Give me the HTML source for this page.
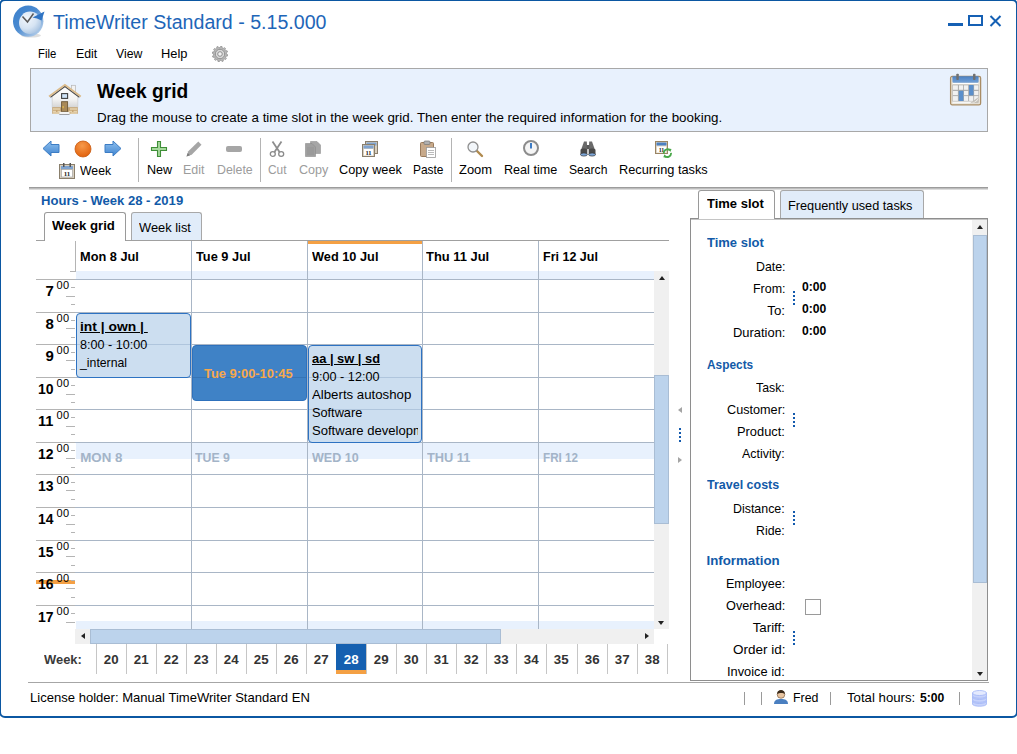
<!DOCTYPE html><html lang="en"><head><meta charset="utf-8"><title>TimeWriter Standard - 5.15.000</title><style>
*{box-sizing:border-box;margin:0;padding:0}
html,body{width:1017px;height:754px;background:#fff;overflow:hidden}
body{font-family:"Liberation Sans",sans-serif;font-size:13.300px;color:#000;position:relative}
.a{position:absolute;white-space:nowrap;line-height:1;transform-origin:0 0}
.win{left:-1px;top:-1px;width:1019px;height:719px;border:2px solid #0b57a2;border-radius:6px}
.dis{color:#9c9c9c}
.b{font-weight:bold}
.u{text-decoration:underline}
.blue{color:#125aa8}
.gl{background:#a9b6c6}
.mm{font-size:11px;letter-spacing:.5px}
.wsep{width:1px;background:#c6c6c6;top:644px;height:30px}
.ev{background:rgba(178,205,232,.66);border:1px solid #2d72c2;border-radius:4px;overflow:hidden}
.dots{width:2px;height:14px;background:repeating-linear-gradient(#1259ad 0 2px,transparent 2px 4px)}
.sb{background:#f0f0f0}
.th{background:#bcd3ec;border:1px solid #a9bdd4}
</style></head><body>
<div class="a win"></div>
<svg class="a" style="left:11px;top:3px" width="36" height="36" viewBox="0 0 36 36">
<defs><radialGradient id="cg" cx="35%" cy="30%" r="75%"><stop offset="0" stop-color="#f2f7fc"/><stop offset=".6" stop-color="#d6e4f3"/><stop offset="1" stop-color="#a9c4e2"/></radialGradient>
<linearGradient id="rg" x1="0" y1="0" x2="1" y2="1"><stop offset="0" stop-color="#3a80cc"/><stop offset=".45" stop-color="#4a8ad0"/><stop offset=".8" stop-color="#9fc0e4"/><stop offset="1" stop-color="#d0e0f2"/></linearGradient></defs>
<ellipse cx="20" cy="32.500" rx="10" ry="2" fill="#000" opacity=".13"/>
<ellipse cx="17.200" cy="18.200" rx="15.200" ry="15.600" fill="url(#rg)"/>
<ellipse cx="19" cy="19.800" rx="11" ry="11.200" fill="url(#cg)"/>
<path d="M11.500 13.500L16.500 19L22.500 10.500" fill="none" stroke="#5a5a5a" stroke-width="1.500"/>
<path d="M21.500 14.500L33.500 8.500L30.500 17.500Q26 15 21.500 14.500Z" fill="#2f74c4"/>
</svg>
<div class="a" style="left:52.5px;top:12px;font-size:20px;transform:scaleX(0.980);color:#1e66b8">TimeWriter Standard - 5.15.000</div>
<div class="a" style="left:948px;top:23px;width:15px;height:3px;background:#1560b4"></div>
<div class="a" style="left:968px;top:15px;width:15px;height:11px;border:2px solid #1560b4"></div>
<svg class="a" style="left:988px;top:14px" width="14" height="14" viewBox="0 0 14 14"><path d="M2.500 2L12.500 12M12.500 2L2.500 12" stroke="#1560b4" stroke-width="2" fill="none"/></svg>
<div class="a" style="left:38.4px;top:47px;transform:scaleX(0.851);">File</div>
<div class="a" style="left:75.5px;top:47px;transform:scaleX(0.927);">Edit</div>
<div class="a" style="left:116.3px;top:47px;transform:scaleX(0.922);">View</div>
<div class="a" style="left:161.1px;top:47px;transform:scaleX(0.968);">Help</div>
<svg class="a" style="left:212px;top:46px" width="16" height="16" viewBox="0 0 16 16"><path d="M14.30 8.00L15.77 8.73L15.53 10.02L13.90 10.20L13.46 11.15L14.36 12.52L13.52 13.52L12.02 12.85L11.15 13.46L11.25 15.09L10.02 15.53L9.05 14.21L8.00 14.30L7.27 15.77L5.98 15.53L5.80 13.90L4.85 13.46L3.48 14.36L2.48 13.52L3.15 12.02L2.54 11.15L0.91 11.25L0.47 10.02L1.79 9.05L1.70 8.00L0.23 7.27L0.47 5.98L2.10 5.80L2.54 4.85L1.64 3.48L2.48 2.48L3.98 3.15L4.85 2.54L4.75 0.91L5.98 0.47L6.95 1.79L8.00 1.70L8.73 0.23L10.02 0.47L10.20 2.10L11.15 2.54L12.52 1.64L13.52 2.48L12.85 3.98L13.46 4.85L15.09 4.75L15.53 5.98L14.21 6.95Z" fill="#b9b9b9" stroke="#8a8a8a" stroke-width=".7"/><circle cx="8" cy="8" r="4.700" fill="#d9d9d9" stroke="#8c8c8c" stroke-width=".9"/><circle cx="8" cy="8" r="2.300" fill="#f2f2f2" stroke="#858585" stroke-width=".9"/></svg>
<div class="a" style="left:30px;top:68px;width:958px;height:64px;background:#e8f1fd;border:1px solid #a8a8a8"></div>
<svg class="a" style="left:47px;top:82px" width="36" height="34" viewBox="0 0 36 34">
<defs><linearGradient id="hg" x1="0" y1="0" x2="0" y2="1"><stop offset="0" stop-color="#fff"/><stop offset=".6" stop-color="#f4f4f4"/><stop offset="1" stop-color="#d4d4d4"/></linearGradient></defs>
<rect x="24.500" y="3.300" width="4" height="8.500" fill="#f2f2f2" stroke="#b4b4b4" stroke-width=".7"/>
<path d="M5.200 13.800L17.900 4.200L30.800 13.800V25.500H5.200Z" fill="url(#hg)" stroke="#c8c8c8" stroke-width=".6"/>
<rect x="5.200" y="25.200" width="25.600" height="6.600" fill="#c6a676"/>
<path d="M6 27H13M23 27H30M6 29.300H9M10.500 29.300H13.500M22 29.300H25M26.500 29.300H30M6 31H12M23.500 31H30" stroke="#e6d4b0" stroke-width="1.300"/>
<path d="M3.400 15.200L17.900 4.500L32.400 15.200" fill="none" stroke="#4e4e4e" stroke-width="1.200"/>
<path d="M2 14.500L17.900 2.700L33.800 14.500" fill="none" stroke="#dcbc8c" stroke-width="1.700"/>
<rect x="14.600" y="11.600" width="6" height="4.800" fill="#cfe3f6" stroke="#404040" stroke-width="1.100"/>
<rect x="14.600" y="19.700" width="6" height="10" fill="#a98958" stroke="#6b5636" stroke-width=".9"/>
<rect x="15.600" y="24" width="1" height="2.200" fill="#f0c444"/>
<rect x="12.300" y="29.900" width="10.200" height="2.100" fill="#f4f4f4"/>
<rect x="12.300" y="32" width="10.200" height=".8" fill="#8c8c8c"/>
</svg>
<div class="a b" style="left:97.4px;top:82px;font-size:19.4px;transform:scaleX(0.988);">Week grid</div>
<div class="a" style="left:97.4px;top:111px;transform:scaleX(1.005);">Drag the mouse to create a time slot in the week grid. Then enter the required information for the booking.</div>
<svg class="a" style="left:949px;top:73px" width="33" height="33" viewBox="0 0 33 33">
<defs><linearGradient id="kg" x1="0" y1="0" x2="0" y2="1"><stop offset="0" stop-color="#4a80c2"/><stop offset="1" stop-color="#73a0d6"/></linearGradient></defs>
<rect x="1.600" y="3.400" width="30" height="28.400" rx="1.600" fill="#ece6da" stroke="#a98d66" stroke-width="1.300"/>
<rect x="3.400" y="3.200" width="26.200" height="6.600" rx="1" fill="url(#kg)"/>
<rect x="3.800" y="10" width="25.400" height="1.100" fill="#fff"/>
<rect x="3.400" y="11.600" width="26.400" height="17" fill="#a9a9a9"/>
<rect x="3.9" y="12.3" width="5.0" height="4.5" fill="#f1f1f1"/><rect x="3.9" y="17.9" width="5.0" height="4.3" fill="#f1f1f1"/><rect x="3.9" y="23.1" width="5.0" height="4.8" fill="#f1f1f1"/><rect x="9.9" y="12.3" width="4.3" height="4.5" fill="#f1f1f1"/><rect x="9.9" y="17.9" width="4.3" height="4.3" fill="#5b8fcb"/><rect x="9.9" y="23.1" width="4.3" height="4.8" fill="#5b8fcb"/><rect x="15.0" y="12.3" width="4.2" height="4.5" fill="#f1f1f1"/><rect x="15.0" y="17.9" width="4.2" height="4.3" fill="#f1f1f1"/><rect x="15.0" y="23.1" width="4.2" height="4.8" fill="#f1f1f1"/><rect x="20.1" y="12.3" width="4.2" height="4.5" fill="#5b8fcb"/><rect x="20.1" y="17.9" width="4.2" height="4.3" fill="#5b8fcb"/><rect x="20.1" y="23.1" width="4.2" height="4.8" fill="#f1f1f1"/><rect x="25.1" y="12.3" width="4.3" height="4.5" fill="#f1f1f1"/><rect x="25.1" y="17.9" width="4.3" height="4.3" fill="#f1f1f1"/><rect x="25.1" y="23.1" width="4.3" height="4.8" fill="#f1f1f1"/><rect x="9.9" y="17.9" width="4.3" height="10" fill="#5b8fcb"/><rect x="20.1" y="12" width="4.2" height="10.200" fill="#5b8fcb"/>
<rect x="3.800" y="28.600" width="25.600" height="1.600" fill="#f6f6f6"/>
<path d="M29.600 24L29.600 30.200L21 30.200Z" fill="#c4c0b8"/><path d="M29.600 24.500C28 28 25 29.500 21.500 30.200C26 29.500 28.500 29 29.600 24.500Z" fill="#fff"/>
<rect x="7.300" y=".8" width="2.500" height="6.200" rx=".8" fill="#707070"/><rect x="24" y=".8" width="2.500" height="6.200" rx=".8" fill="#707070"/>
</svg>
<svg class="a" style="left:42px;top:140px" width="18" height="17" viewBox="0 0 18 17"><defs><linearGradient id="ag" x1="0" y1="0" x2="0" y2="1"><stop offset="0" stop-color="#8fc0ee"/><stop offset="1" stop-color="#3f84d0"/></linearGradient></defs><path d="M1 8.500L9 1V4.500H17V12.500H9V16Z" fill="url(#ag)" stroke="#3c7cc4" stroke-width="1"/></svg>
<svg class="a" style="left:74px;top:140px" width="18" height="18" viewBox="0 0 18 18"><defs><radialGradient id="og" cx="45%" cy="30%" r="70%"><stop offset="0" stop-color="#f79a4a"/><stop offset="1" stop-color="#e2620e"/></radialGradient></defs><circle cx="9" cy="9" r="8" fill="url(#og)" stroke="#c85a10" stroke-width=".8"/></svg>
<svg class="a" style="left:104px;top:140px" width="18" height="17" viewBox="0 0 18 17"><path d="M17 8.500L9 1V4.500H1V12.500H9V16Z" fill="url(#ag)" stroke="#3c7cc4" stroke-width="1"/></svg>
<svg class="a" style="left:59px;top:163px" width="16" height="16" viewBox="0 0 16 16"><rect x=".5" y="1.5" width="15" height="14" fill="#d8cfbf" stroke="#8a7f6c"/><rect x="2" y="3" width="12" height="3" fill="#7fa3cf"/><rect x="2.5" y="6.5" width="11" height="7.500" fill="#fff" stroke="#999" stroke-width=".6"/><text x="8" y="13" font-size="7" font-weight="bold" text-anchor="middle" font-family="Liberation Serif,serif" fill="#222">11</text><rect x="4" y="0" width="1.500" height="4" fill="#555"/><rect x="10.500" y="0" width="1.500" height="4" fill="#555"/></svg>
<div class="a" style="left:79.8px;top:164px;transform:scaleX(0.921);">Week</div>
<div class="a" style="left:138px;top:138px;width:1px;height:44px;background:#b4b4b4"></div>
<div class="a" style="left:260px;top:138px;width:1px;height:44px;background:#b4b4b4"></div>
<div class="a" style="left:451px;top:138px;width:1px;height:44px;background:#b4b4b4"></div>
<svg class="a" style="left:150px;top:140px" width="18" height="18" viewBox="0 0 18 18"><path d="M7.500 1.500H10.500V7.500H16.500V10.500H10.500V16.500H7.500V10.500H1.500V7.500H7.500Z" fill="#a6d89c" stroke="#3f8f38" stroke-width="1.100"/></svg>
<svg class="a" style="left:185px;top:140px" width="18" height="18" viewBox="0 0 18 18"><path d="M1.500 16.500L3.300 11.300L13.300 1.500L16.500 4.700L6.700 14.700Z" fill="#a6a6a6"/><path d="M1.500 16.500L2.700 13L5 15.300Z" fill="#7a7a7a"/></svg>
<div class="a" style="left:226px;top:146px;width:16px;height:6px;background:#a6a6a6;border-radius:2px"></div>
<svg class="a" style="left:269px;top:141px" width="16" height="17" viewBox="0 0 16 17"><path d="M3.500 .5L10.500 11M12.500 .5L5.500 11" stroke="#8e8e8e" stroke-width="1.800" fill="none"/><ellipse cx="3.800" cy="13" rx="2.500" ry="2.300" fill="none" stroke="#8a8a8a" stroke-width="1.300"/><ellipse cx="12.200" cy="13" rx="2.500" ry="2.300" fill="none" stroke="#8a8a8a" stroke-width="1.300"/></svg>
<svg class="a" style="left:304px;top:139px" width="18" height="19" viewBox="0 0 18 19"><path d="M6.500 2.500H13L16.500 6V14.500H6.500Z" fill="#a6a6a6" stroke="#949494" stroke-width=".6"/><path d="M1.500 4.500H8L11.500 8V17.500H1.500Z" fill="#a0a0a0" stroke="#8c8c8c" stroke-width=".6"/><path d="M3 9H10M3 11H10M3 13H10M3 15H10" stroke="#8f8f8f" stroke-width=".6"/></svg>
<svg class="a" style="left:361px;top:140px" width="18" height="18" viewBox="0 0 18 18"><rect x="4.500" y="1.500" width="12" height="12" fill="#d8cfbf" stroke="#8a7f6c"/><rect x="5.500" y="2.500" width="10" height="3" fill="#7fa3cf"/><rect x="1.500" y="4.500" width="12" height="12" fill="#d8cfbf" stroke="#8a7f6c"/><rect x="2.500" y="5.500" width="10" height="3" fill="#7fa3cf"/><rect x="3" y="9" width="9" height="6.500" fill="#fff"/><text x="7.500" y="15" font-size="6.500" font-weight="bold" text-anchor="middle" font-family="Liberation Serif,serif" fill="#222">11</text></svg>
<svg class="a" style="left:419px;top:140px" width="18" height="18" viewBox="0 0 18 18"><rect x="1.500" y="2.500" width="13" height="14" rx="1" fill="#c7a98a" stroke="#9a7b5c"/><rect x="5" y="1" width="6" height="3.500" rx="1" fill="#b0b0b0" stroke="#777" stroke-width=".7"/><rect x="7.500" y="7.500" width="9" height="10" fill="#fff" stroke="#999" stroke-width=".8"/><path d="M9 10.500H15M9 12.500H15M9 14.500H15" stroke="#aaa" stroke-width=".8"/></svg>
<svg class="a" style="left:466px;top:140px" width="18" height="18" viewBox="0 0 18 18"><path d="M10 10L16 16" stroke="#b08a4e" stroke-width="2.400" stroke-linecap="round"/><circle cx="7" cy="7" r="5" fill="#f2f6fa" stroke="#8f8f8f" stroke-width="1.300"/></svg>
<svg class="a" style="left:522px;top:139px" width="18" height="18" viewBox="0 0 18 18"><circle cx="9" cy="9" r="7" fill="#f5f5f5" stroke="#8c8c8c" stroke-width="2"/><path d="M9 4V9.500" stroke="#2a6fc0" stroke-width="1.800"/></svg>
<svg class="a" style="left:579px;top:140px" width="18" height="18" viewBox="0 0 18 18"><path d="M5 1.500H7.800L8.300 10H2Z" fill="#6a6a6a"/><path d="M10.200 1.500H13L16 10H9.700Z" fill="#6a6a6a"/><path d="M1.500 10C1.500 8 8.300 8 8.300 10V14.500H1.500Z" fill="#4a4a4a"/><path d="M9.700 10C9.700 8 16.500 8 16.500 10V14.500H9.700Z" fill="#4a4a4a"/><rect x="7.800" y="5" width="2.400" height="4" fill="#5a5a5a"/><ellipse cx="4.900" cy="14.500" rx="3.400" ry="1.600" fill="#7da6d8" stroke="#3a3a3a" stroke-width=".7"/><ellipse cx="13.100" cy="14.500" rx="3.400" ry="1.600" fill="#7da6d8" stroke="#3a3a3a" stroke-width=".7"/></svg>
<svg class="a" style="left:654px;top:140px" width="18" height="18" viewBox="0 0 18 18"><rect x="1.500" y="1.500" width="12" height="12" fill="#ded6c8" stroke="#9a8462"/><rect x="2.500" y="2.500" width="10" height="3" fill="#4a7fc0"/><rect x="3" y="6.500" width="9" height="6" fill="#fff"/><text x="7.500" y="12" font-size="6" font-weight="bold" text-anchor="middle" font-family="Liberation Serif,serif" fill="#222">11</text><path d="M9.800 13.500A3.600 3.600 0 0 1 16 10.500" fill="none" stroke="#4aa84a" stroke-width="1.800"/><path d="M17 12.800A3.600 3.600 0 0 1 10.800 15.800" fill="none" stroke="#4aa84a" stroke-width="1.800"/><path d="M14.300 8.500L17.500 9L16.300 12Z" fill="#4aa84a"/><path d="M12.500 17.800L9.300 17.300L10.500 14.300Z" fill="#4aa84a"/></svg>
<div class="a" style="left:146.9px;top:163px;transform:scaleX(0.946);">New</div>
<div class="a dis" style="left:183.4px;top:163px;transform:scaleX(0.936);">Edit</div>
<div class="a dis" style="left:216.5px;top:163px;transform:scaleX(0.930);">Delete</div>
<div class="a dis" style="left:268.4px;top:163px;transform:scaleX(0.896);">Cut</div>
<div class="a dis" style="left:298.9px;top:163px;transform:scaleX(0.945);">Copy</div>
<div class="a" style="left:339.2px;top:163px;transform:scaleX(0.955);">Copy week</div>
<div class="a" style="left:413.1px;top:163px;transform:scaleX(0.897);">Paste</div>
<div class="a" style="left:459.4px;top:163px;transform:scaleX(0.974);">Zoom</div>
<div class="a" style="left:504.4px;top:163px;transform:scaleX(0.948);">Real time</div>
<div class="a" style="left:568.9px;top:163px;transform:scaleX(0.912);">Search</div>
<div class="a" style="left:619.3px;top:163px;transform:scaleX(0.960);">Recurring tasks</div>
<div class="a" style="left:29px;top:187px;width:959px;height:3px;background:linear-gradient(#8c8c8c,#bdbdbd 50%,#ececec)"></div>
<div class="a b blue" style="left:41.0px;top:194px;transform:scaleX(0.983);">Hours - Week 28 - 2019</div>
<div class="a" style="left:36px;top:240px;width:633px;height:1px;background:#a0a0a0"></div>
<div class="a" style="left:44px;top:212px;width:82px;height:29px;background:#fff;border:1px solid #9a9a9a;border-bottom:none;border-radius:3px 3px 0 0"></div>
<div class="a b" style="left:52.0px;top:219px;transform:scaleX(0.994);">Week grid</div>
<div class="a" style="left:131px;top:212px;width:71px;height:28px;background:#e1ecf9;border:1px solid #a8a8a8;border-bottom:none;border-radius:3px 3px 0 0"></div>
<div class="a" style="left:139.2px;top:221px;transform:scaleX(0.966);">Week list</div>
<div class="a" style="left:76px;top:271px;width:578px;height:8px;background:#e8f1fd"></div>
<div class="a" style="left:76px;top:443px;width:578px;height:16px;background:#e8f1fd"></div>
<div class="a" style="left:76px;top:621px;width:578px;height:8px;background:#e8f1fd"></div>
<div class="a" style="left:307px;top:241px;width:116px;height:3px;background:#f4a044"></div>
<div class="a gl" style="left:191px;top:241px;width:1px;height:388px"></div>
<div class="a gl" style="left:307px;top:241px;width:1px;height:388px"></div>
<div class="a gl" style="left:422px;top:241px;width:1px;height:388px"></div>
<div class="a gl" style="left:538px;top:241px;width:1px;height:388px"></div>
<div class="a" style="left:75px;top:241px;width:1px;height:31px;background:#b4b4b4"></div>
<div class="a" style="left:70px;top:271px;width:5px;height:1px;background:#b4b4b4"></div>
<div class="a" style="left:36px;top:580px;width:39px;height:4px;background:#f4a044"></div>
<div class="a gl" style="left:75px;top:279px;width:579px;height:1px"></div>
<div class="a" style="left:36px;top:279px;width:39px;height:1px;background:#b4b4b4"></div>
<div class="a b" style="left:45.5px;top:283px;font-size:15px;">7</div>
<div class="a mm" style="left:56.500px;top:280px">00</div>
<div class="a" style="left:71px;top:287px;width:4px;height:1px;background:#b4b4b4"></div>
<div class="a" style="left:66px;top:296px;width:9px;height:1px;background:#b4b4b4"></div>
<div class="a" style="left:71px;top:304px;width:4px;height:1px;background:#b4b4b4"></div>
<div class="a gl" style="left:75px;top:312px;width:579px;height:1px"></div>
<div class="a" style="left:36px;top:312px;width:39px;height:1px;background:#b4b4b4"></div>
<div class="a b" style="left:45.5px;top:316px;font-size:15px;">8</div>
<div class="a mm" style="left:56.500px;top:313px">00</div>
<div class="a" style="left:71px;top:320px;width:4px;height:1px;background:#b4b4b4"></div>
<div class="a" style="left:66px;top:328px;width:9px;height:1px;background:#b4b4b4"></div>
<div class="a" style="left:71px;top:337px;width:4px;height:1px;background:#b4b4b4"></div>
<div class="a gl" style="left:75px;top:344px;width:579px;height:1px"></div>
<div class="a" style="left:36px;top:344px;width:39px;height:1px;background:#b4b4b4"></div>
<div class="a b" style="left:45.5px;top:348px;font-size:15px;">9</div>
<div class="a mm" style="left:56.500px;top:345px">00</div>
<div class="a" style="left:71px;top:352px;width:4px;height:1px;background:#b4b4b4"></div>
<div class="a" style="left:66px;top:360px;width:9px;height:1px;background:#b4b4b4"></div>
<div class="a" style="left:71px;top:369px;width:4px;height:1px;background:#b4b4b4"></div>
<div class="a gl" style="left:75px;top:377px;width:579px;height:1px"></div>
<div class="a" style="left:36px;top:377px;width:39px;height:1px;background:#b4b4b4"></div>
<div class="a b" style="left:38.4px;top:381px;font-size:15px;transform:scaleX(0.932);">10</div>
<div class="a mm" style="left:56.500px;top:378px">00</div>
<div class="a" style="left:71px;top:385px;width:4px;height:1px;background:#b4b4b4"></div>
<div class="a" style="left:66px;top:394px;width:9px;height:1px;background:#b4b4b4"></div>
<div class="a" style="left:71px;top:402px;width:4px;height:1px;background:#b4b4b4"></div>
<div class="a gl" style="left:75px;top:409px;width:579px;height:1px"></div>
<div class="a" style="left:36px;top:409px;width:39px;height:1px;background:#b4b4b4"></div>
<div class="a b" style="left:38.4px;top:413px;font-size:15px;transform:scaleX(0.976);">11</div>
<div class="a mm" style="left:56.500px;top:410px">00</div>
<div class="a" style="left:71px;top:417px;width:4px;height:1px;background:#b4b4b4"></div>
<div class="a" style="left:66px;top:426px;width:9px;height:1px;background:#b4b4b4"></div>
<div class="a" style="left:71px;top:434px;width:4px;height:1px;background:#b4b4b4"></div>
<div class="a gl" style="left:75px;top:442px;width:579px;height:1px"></div>
<div class="a" style="left:36px;top:442px;width:39px;height:1px;background:#b4b4b4"></div>
<div class="a b" style="left:38.4px;top:446px;font-size:15px;transform:scaleX(0.932);">12</div>
<div class="a mm" style="left:56.500px;top:443px">00</div>
<div class="a" style="left:71px;top:450px;width:4px;height:1px;background:#b4b4b4"></div>
<div class="a" style="left:66px;top:458px;width:9px;height:1px;background:#b4b4b4"></div>
<div class="a" style="left:71px;top:467px;width:4px;height:1px;background:#b4b4b4"></div>
<div class="a gl" style="left:75px;top:474px;width:579px;height:1px"></div>
<div class="a" style="left:36px;top:474px;width:39px;height:1px;background:#b4b4b4"></div>
<div class="a b" style="left:38.4px;top:478px;font-size:15px;transform:scaleX(0.932);">13</div>
<div class="a mm" style="left:56.500px;top:475px">00</div>
<div class="a" style="left:71px;top:482px;width:4px;height:1px;background:#b4b4b4"></div>
<div class="a" style="left:66px;top:490px;width:9px;height:1px;background:#b4b4b4"></div>
<div class="a" style="left:71px;top:499px;width:4px;height:1px;background:#b4b4b4"></div>
<div class="a gl" style="left:75px;top:507px;width:579px;height:1px"></div>
<div class="a" style="left:36px;top:507px;width:39px;height:1px;background:#b4b4b4"></div>
<div class="a b" style="left:38.4px;top:511px;font-size:15px;transform:scaleX(0.925);">14</div>
<div class="a mm" style="left:56.500px;top:508px">00</div>
<div class="a" style="left:71px;top:515px;width:4px;height:1px;background:#b4b4b4"></div>
<div class="a" style="left:66px;top:524px;width:9px;height:1px;background:#b4b4b4"></div>
<div class="a" style="left:71px;top:532px;width:4px;height:1px;background:#b4b4b4"></div>
<div class="a gl" style="left:75px;top:540px;width:579px;height:1px"></div>
<div class="a" style="left:36px;top:540px;width:39px;height:1px;background:#b4b4b4"></div>
<div class="a b" style="left:38.4px;top:544px;font-size:15px;transform:scaleX(0.932);">15</div>
<div class="a mm" style="left:56.500px;top:541px">00</div>
<div class="a" style="left:71px;top:548px;width:4px;height:1px;background:#b4b4b4"></div>
<div class="a" style="left:66px;top:556px;width:9px;height:1px;background:#b4b4b4"></div>
<div class="a" style="left:71px;top:565px;width:4px;height:1px;background:#b4b4b4"></div>
<div class="a gl" style="left:75px;top:572px;width:579px;height:1px"></div>
<div class="a" style="left:36px;top:572px;width:39px;height:1px;background:#b4b4b4"></div>
<div class="a b" style="left:38.4px;top:576px;font-size:15px;transform:scaleX(0.932);">16</div>
<div class="a mm" style="left:56.500px;top:573px">00</div>
<div class="a" style="left:71px;top:580px;width:4px;height:1px;background:#b4b4b4"></div>
<div class="a" style="left:66px;top:588px;width:9px;height:1px;background:#b4b4b4"></div>
<div class="a" style="left:71px;top:597px;width:4px;height:1px;background:#b4b4b4"></div>
<div class="a gl" style="left:75px;top:605px;width:579px;height:1px"></div>
<div class="a" style="left:36px;top:605px;width:39px;height:1px;background:#b4b4b4"></div>
<div class="a b" style="left:38.4px;top:609px;font-size:15px;transform:scaleX(0.932);">17</div>
<div class="a mm" style="left:56.500px;top:606px">00</div>
<div class="a" style="left:71px;top:613px;width:4px;height:1px;background:#b4b4b4"></div>
<div class="a" style="left:66px;top:622px;width:9px;height:1px;background:#b4b4b4"></div>
<div class="a b" style="left:80.3px;top:250px;transform:scaleX(0.960);">Mon 8 Jul</div>
<div class="a b" style="left:195.8px;top:250px;transform:scaleX(0.962);">Tue 9 Jul</div>
<div class="a b" style="left:312.0px;top:250px;transform:scaleX(0.960);">Wed 10 Jul</div>
<div class="a b" style="left:426.3px;top:250px;transform:scaleX(0.972);">Thu 11 Jul</div>
<div class="a b" style="left:542.9px;top:250px;transform:scaleX(0.940);">Fri 12 Jul</div>
<div class="a b" style="left:80.3px;top:451px;color:#a3b4c8">MON 8</div>
<div class="a b" style="left:195.2px;top:451px;transform:scaleX(0.925);color:#a3b4c8">TUE 9</div>
<div class="a b" style="left:312.0px;top:451px;transform:scaleX(0.943);color:#a3b4c8">WED 10</div>
<div class="a b" style="left:426.6px;top:451px;transform:scaleX(0.962);color:#a3b4c8">THU 11</div>
<div class="a b" style="left:542.8px;top:451px;transform:scaleX(0.878);color:#a3b4c8">FRI 12</div>
<div class="a ev" style="left:76px;top:313px;width:115px;height:65px">
<div class="a b u" style="left:3.2px;top:6px;transform:scaleX(1.042);">int | own |&nbsp;</div>
<div class="a" style="left:3.2px;top:24px;transform:scaleX(0.948);">8:00 - 10:00</div>
<div class="a" style="left:3.4px;top:42px;transform:scaleX(0.923);">_internal</div>
</div>
<div class="a ev" style="left:192px;top:345px;width:115px;height:56px;background:#3f82c6;border-color:#2e71bc">
<div class="a" style="left:0;top:31px;width:113px;height:1px;background:rgba(0,20,70,.13)"></div>
<div class="a b" style="left:11.2px;top:21px;transform:scaleX(0.969);color:#f7a84c">Tue 9:00-10:45</div>
</div>
<div class="a ev" style="left:308px;top:345px;width:114px;height:98px"><div class="a" style="left:0;top:0;width:108.600px;height:100px;overflow:hidden">
<div class="a b u" style="left:3.0px;top:6px;transform:scaleX(0.968);">aa | sw | sd</div>
<div class="a" style="left:3.0px;top:24px;transform:scaleX(0.951);">9:00 - 12:00</div>
<div class="a" style="left:3.0px;top:42px;transform:scaleX(0.995);">Alberts autoshop</div>
<div class="a" style="left:3.0px;top:60px;transform:scaleX(0.958);">Software</div>
<div class="a" style="left:3.0px;top:78px;transform:scaleX(0.983);">Software development</div>
</div></div>
<div class="a sb" style="left:654px;top:271px;width:15px;height:358px"></div>
<div class="a th" style="left:654px;top:375px;width:15px;height:149px"></div>
<div class="a" style="left:658.500px;top:276px;width:0;height:0;border:3.500px solid transparent;border-top:none;border-bottom:4px solid #222"></div>
<div class="a" style="left:658px;top:621px;width:0;height:0;border:3.500px solid transparent;border-bottom:none;border-top:4px solid #222"></div>
<div class="a sb" style="left:75px;top:629px;width:579px;height:15px"></div>
<div class="a th" style="left:90px;top:629px;width:411px;height:15px"></div>
<div class="a" style="left:81px;top:633px;width:0;height:0;border:3.500px solid transparent;border-left:none;border-right:4px solid #222"></div>
<div class="a" style="left:645px;top:633px;width:0;height:0;border:3.500px solid transparent;border-right:none;border-left:4px solid #222"></div>
<div class="a b" style="left:44.0px;top:653px;transform:scaleX(0.972);color:#3a3a3a">Week:</div>
<div class="a wsep" style="left:96px"></div>
<div class="a b" style="left:103.8px;top:653px;color:#333">20</div>
<div class="a wsep" style="left:126px"></div>
<div class="a b" style="left:133.8px;top:653px;color:#333">21</div>
<div class="a wsep" style="left:156px"></div>
<div class="a b" style="left:163.8px;top:653px;color:#333">22</div>
<div class="a wsep" style="left:186px"></div>
<div class="a b" style="left:193.8px;top:653px;color:#333">23</div>
<div class="a wsep" style="left:216px"></div>
<div class="a b" style="left:223.8px;top:653px;color:#333">24</div>
<div class="a wsep" style="left:246px"></div>
<div class="a b" style="left:253.8px;top:653px;color:#333">25</div>
<div class="a wsep" style="left:276px"></div>
<div class="a b" style="left:283.8px;top:653px;color:#333">26</div>
<div class="a wsep" style="left:306px"></div>
<div class="a b" style="left:313.8px;top:653px;color:#333">27</div>
<div class="a wsep" style="left:336px"></div>
<div class="a" style="left:336px;top:644px;width:30px;height:26px;background:#1560b0"></div>
<div class="a" style="left:336px;top:670px;width:30px;height:4px;background:#f4a044"></div>
<div class="a b" style="left:343.8px;top:653px;color:#fff">28</div>
<div class="a wsep" style="left:366px"></div>
<div class="a b" style="left:373.8px;top:653px;color:#333">29</div>
<div class="a wsep" style="left:396px"></div>
<div class="a b" style="left:403.8px;top:653px;color:#333">30</div>
<div class="a wsep" style="left:426px"></div>
<div class="a b" style="left:433.8px;top:653px;color:#333">31</div>
<div class="a wsep" style="left:456px"></div>
<div class="a b" style="left:463.8px;top:653px;color:#333">32</div>
<div class="a wsep" style="left:486px"></div>
<div class="a b" style="left:493.8px;top:653px;color:#333">33</div>
<div class="a wsep" style="left:516px"></div>
<div class="a b" style="left:523.8px;top:653px;color:#333">34</div>
<div class="a wsep" style="left:546px"></div>
<div class="a b" style="left:553.8px;top:653px;color:#333">35</div>
<div class="a wsep" style="left:577px"></div>
<div class="a b" style="left:584.8px;top:653px;color:#333">36</div>
<div class="a wsep" style="left:607px"></div>
<div class="a b" style="left:614.8px;top:653px;color:#333">37</div>
<div class="a wsep" style="left:637px"></div>
<div class="a b" style="left:644.8px;top:653px;color:#333">38</div>
<div class="a wsep" style="left:667px"></div>
<div class="a" style="left:678px;top:406.500px;width:0;height:0;border:3.200px solid transparent;border-left:none;border-right:4px solid #a4a4a4"></div>
<div class="a" style="left:678px;top:456.500px;width:0;height:0;border:3.200px solid transparent;border-right:none;border-left:4px solid #a4a4a4"></div>
<div class="a dots" style="left:679px;top:428px"></div>
<div class="a" style="left:690px;top:218px;width:298px;height:463px;background:#fff;border:1px solid #8e8e8e"></div><div class="a" style="left:691px;top:219px;width:296px;height:1px;background:#c4c4c4"></div>
<div class="a" style="left:698px;top:190px;width:77px;height:29px;background:#fff;border:1px solid #9a9a9a;border-bottom:none;border-radius:3px 3px 0 0"></div>
<div class="a b" style="left:707.2px;top:197px;transform:scaleX(0.977);">Time slot</div>
<div class="a" style="left:780px;top:190px;width:144px;height:28px;background:#e1ecf9;border:1px solid #a8a8a8;border-bottom:none;border-radius:3px 3px 0 0"></div>
<div class="a" style="left:788.3px;top:199px;transform:scaleX(0.957);">Frequently used tasks</div>
<div class="a sb" style="left:972px;top:220px;width:15px;height:460px"></div>
<div class="a th" style="left:973px;top:235px;width:14px;height:348px"></div>
<div class="a" style="left:977px;top:225px;width:0;height:0;border:3.500px solid transparent;border-top:none;border-bottom:4px solid #222"></div>
<div class="a" style="left:977px;top:672px;width:0;height:0;border:3.500px solid transparent;border-bottom:none;border-top:4px solid #222"></div>
<div class="a b blue" style="left:707.2px;top:236px;transform:scaleX(0.977);">Time slot</div>
<div class="a" style="left:755.5px;top:260px;transform:scaleX(0.929);">Date:</div>
<div class="a" style="left:752.5px;top:282px;transform:scaleX(0.935);">From:</div>
<div class="a" style="left:767.3px;top:304px;">To:</div>
<div class="a" style="left:732.5px;top:326px;transform:scaleX(0.972);">Duration:</div>
<div class="a b" style="left:802.3px;top:280px;transform:scaleX(0.913);">0:00</div>
<div class="a b" style="left:802.3px;top:302px;transform:scaleX(0.913);">0:00</div>
<div class="a b" style="left:802.3px;top:324px;transform:scaleX(0.913);">0:00</div>
<div class="a dots" style="left:793px;top:291px"></div>
<div class="a b blue" style="left:706.7px;top:358px;transform:scaleX(0.893);">Aspects</div>
<div class="a" style="left:756.3px;top:381px;transform:scaleX(0.926);">Task:</div>
<div class="a" style="left:726.6px;top:403px;transform:scaleX(0.952);">Customer:</div>
<div class="a" style="left:737.2px;top:425px;transform:scaleX(0.966);">Product:</div>
<div class="a" style="left:742.2px;top:447px;transform:scaleX(0.933);">Activity:</div>
<div class="a dots" style="left:793px;top:413px"></div>
<div class="a b blue" style="left:706.7px;top:478px;transform:scaleX(0.939);">Travel costs</div>
<div class="a" style="left:733.2px;top:502px;transform:scaleX(0.933);">Distance:</div>
<div class="a" style="left:756.3px;top:524px;transform:scaleX(0.926);">Ride:</div>
<div class="a dots" style="left:793px;top:511px"></div>
<div class="a b blue" style="left:706.5px;top:554px;">Information</div>
<div class="a" style="left:725.7px;top:577px;transform:scaleX(0.943);">Employee:</div>
<div class="a" style="left:725.7px;top:599px;transform:scaleX(0.955);">Overhead:</div>
<div class="a" style="left:752.7px;top:621px;">Tariff:</div>
<div class="a" style="left:732.5px;top:643px;transform:scaleX(1.014);">Order id:</div>
<div class="a" style="left:727.3px;top:665px;transform:scaleX(0.964);">Invoice id:</div>
<div class="a" style="left:805px;top:599px;width:16px;height:16px;background:#fff;border:1px solid #9a9a9a"></div>
<div class="a dots" style="left:793px;top:631px"></div>
<div class="a" style="left:28px;top:682px;width:961px;height:1px;background:#a6a6a6"></div>
<div class="a" style="left:30.1px;top:691px;transform:scaleX(0.982);">License holder: Manual TimeWriter Standard EN</div>
<div class="a" style="left:744px;top:692px;width:1px;height:13px;background:#9a9a9a"></div>
<div class="a" style="left:761px;top:692px;width:1px;height:13px;background:#9a9a9a"></div>
<div class="a" style="left:830px;top:692px;width:1px;height:13px;background:#9a9a9a"></div>
<div class="a" style="left:959px;top:692px;width:1px;height:13px;background:#9a9a9a"></div>
<svg class="a" style="left:773px;top:689px" width="16" height="16" viewBox="0 0 16 16"><path d="M1 15C1 11 4 10 8 10C12 10 15 11 15 15Z" fill="#4a7fc0"/><circle cx="8" cy="5.500" r="3.800" fill="#e8c4a0" stroke="#6b4a2a" stroke-width=".6"/><path d="M4.200 5C4.200 2 6 1 8 1C10 1 11.800 2 11.800 5C10.500 3.500 6 3.500 4.200 5Z" fill="#3a2a1a"/></svg>
<div class="a" style="left:793.4px;top:691px;transform:scaleX(0.928);">Fred</div>
<div class="a" style="left:846.5px;top:691px;transform:scaleX(0.993);">Total hours:</div>
<div class="a b" style="left:919.7px;top:691px;transform:scaleX(0.916);">5:00</div>
<svg class="a" style="left:971px;top:689px" width="17" height="18" viewBox="0 0 17 18"><g fill="#c6d2fb" stroke="#a2b6f6" stroke-width=".8"><path d="M1.500 12V15C1.500 18 15.500 18 15.500 15V12Z"/><ellipse cx="8.500" cy="12" rx="7" ry="2.500"/><path d="M1.500 8V11C1.500 14 15.500 14 15.500 11V8Z"/><ellipse cx="8.500" cy="8" rx="7" ry="2.500"/><path d="M1.500 4V7C1.500 10 15.500 10 15.500 7V4Z"/><ellipse cx="8.500" cy="4" rx="7" ry="2.500" fill="#e4eafe"/></g></svg>
</body></html>
